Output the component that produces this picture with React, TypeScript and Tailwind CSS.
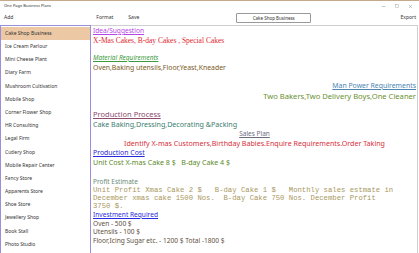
import { Minus, Square, X } from 'lucide-react'

const PLANS = [
  'Cake Shop Business',
  'Ice Cream Parlour',
  'Mini Cheese Plant',
  'Diary Farm',
  'Mushroom Cultivation',
  'Mobile Shop',
  'Corner Flower Shop',
  'HR Consulting',
  'Legal Firm',
  'Cutlery Shop',
  'Mobile Repair Center',
  'Fancy Store',
  'Apparents Store',
  'Shoe Store',
  'Jewellery Shop',
  'Book Stall',
  'Photo Studio',
]

const PROFIT_LINES = [
  'Unit Profit Xmas Cake 2 $   B-day Cake 1 $   Monthly sales estmate in',
  'December xmas cake 1500 Nos.  B-day Cake 750 Nos. December Profit',
  '3750 $.',
]

export default function App() {
  const selected = 'Cake Shop Business'

  return (
    <div className="w-[419px] h-[253px] bg-white overflow-hidden flex flex-col border-t border-[#c6a98c] font-['Noto_Sans',sans-serif] text-[#222]">
      {/* title bar */}
      <div className="h-[10px] flex items-center justify-between pl-[4px] pr-[6px]">
        <span className="text-[4px] leading-none text-[#333]">One Page Business Plans</span>
        <div className="flex items-center gap-[9px] text-[#555]">
          <Minus className="w-[5px] h-[5px]" strokeWidth={1.5} />
          <Square className="w-[4px] h-[4px]" strokeWidth={1.5} />
          <X className="w-[5px] h-[5px]" strokeWidth={1.5} />
        </div>
      </div>

      {/* toolbar */}
      <div className="h-[14px] flex items-center text-[5px] text-[#333]">
        <span className="ml-[4px]">Add</span>
        <span className="ml-[83px]">Format</span>
        <span className="ml-[15px]">Save</span>
        <div className="ml-[97px] w-[75px] h-[10px] border border-[#999] rounded-[1px] flex items-center justify-center text-[4.5px]">
          Cake Shop Business
        </div>
        <span className="ml-auto mr-[3px]">Export</span>
      </div>

      <div className="flex-1 flex min-h-0">
        {/* plan list */}
        <aside className="w-[91px] shrink-0 border-l border-t border-r border-[#9a8fdc] pt-[1px]">
          {PLANS.map((plan) => (
            <div
              key={plan}
              className={`h-[13.2px] flex items-center pl-[4px] text-[5px] text-[#333] ${plan === selected ? 'bg-[#ecc8a4]' : ''}`}
            >
              {plan}
            </div>
          ))}
        </aside>

        {/* plan content */}
        <main className="flex-1 border-t border-r border-[#cfcfcf] mr-[1px] pl-[2px] pr-[1px] text-[6.9px]">
          <div className="h-[10px] leading-[10px] text-[6.6px] text-[#b545e6] underline">Idea/Suggestion</div>
          <div className="h-[9px] leading-[9px] font-['Liberation_Serif',serif] text-[7.5px] text-[#e2242c]">
            X-Mas Cakes, B-day Cakes , Special Cakes
          </div>
          <div className="h-[8px]" />
          <div className="h-[10px] leading-[10px] text-[6.5px] italic text-[#3c9a3c] underline">Material Requirements</div>
          <div className="h-[9px] leading-[9px] text-[#7a5a26]">Oven,Baking utensils,Floor,Yeast,Kneader</div>
          <div className="h-[9px]" />
          <div className="h-[10px] leading-[10px] text-right text-[#4a86b0] underline">Man Power Requirements</div>
          <div className="h-[10px] leading-[10px] text-right text-[7.6px] text-[#6a9030]">
            Two Bakers,Two Delivery Boys,One Cleaner
          </div>
          <div className="h-[8px]" />
          <div className="h-[10px] leading-[10px] text-[7.5px] text-[#8b4a6e] underline">Production Process</div>
          <div className="h-[10px] leading-[10px] text-[7.1px] text-[#3a7e6e]">Cake Baking,Dressing,Decorating &amp;Packing</div>
          <div className="h-[9px] leading-[9px] text-center text-[6.5px] text-[#6e6e80] underline">Sales Plan</div>
          <div className="h-[10px] leading-[10px] text-center text-[7.1px] text-[#d8303a]">
            Identify X-mas Customers,Birthday Babies.Enquire Requirements.Order Taking
          </div>
          <div className="h-[10px] leading-[10px] text-[#2828d8] underline">Production Cost</div>
          <div className="h-[9px] leading-[9px] text-[7.1px] text-[#5a8a28] whitespace-pre">Unit Cost X-mas Cake 8 $   B-day Cake 4 $</div>
          <div className="h-[10px]" />
          <div className="h-[9px] leading-[9px] text-[6.5px] text-[#6a8a78]">Profit Estimate</div>
          <div className="font-['Liberation_Mono',monospace] text-[7.25px] text-[#a89860]">
            {PROFIT_LINES.map((line) => (
              <div key={line} className="h-[8px] leading-[8px] whitespace-pre">{line}</div>
            ))}
          </div>
          <div className="h-[10px] leading-[10px] text-[6.6px] text-[#2a2ae0] underline">Investment Required</div>
          <div className="h-[8px] leading-[8px] text-[6.6px] text-[#5e5040]">Oven - 500 $</div>
          <div className="h-[8px] leading-[8px] text-[6.6px] text-[#5e5040]">Utensils - 100 $</div>
          <div className="h-[9px] leading-[9px] text-[6.6px] text-[#5e5040]">Floor,Icing Sugar etc. - 1200 $ Total -1800 $</div>
        </main>
      </div>
    </div>
  )
}
